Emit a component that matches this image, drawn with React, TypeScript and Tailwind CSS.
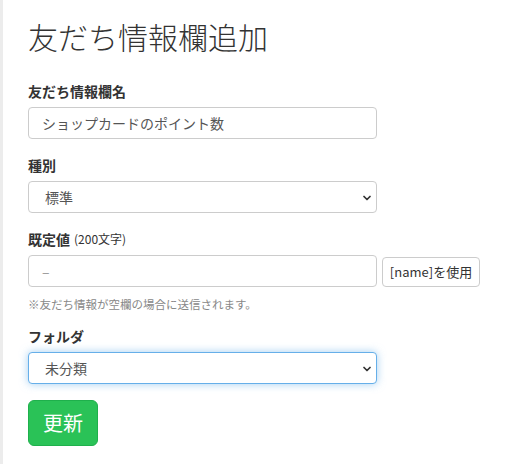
import { ChevronDown } from "lucide-react"

const font = { fontFamily: '"Noto Sans CJK JP", "Noto Sans", sans-serif' }

function Label({ children, sub }: { children: string; sub?: string }) {
  return (
    <div className="h-5 mb-[6px] flex items-center text-[14px] font-bold text-[#333] leading-5">
      {children}
      {sub && <span className="ml-1 text-[12px] font-normal">{sub}</span>}
    </div>
  )
}

function Select({ value, focused }: { value: string; focused?: boolean }) {
  return (
    <div
      className={`relative w-[349px] h-8 rounded-[4px] border bg-white flex items-center pl-[16px] text-[14px] text-[#555] ${
        focused
          ? "border-[#66afe9] shadow-[0_0_8px_rgba(102,175,233,0.6)]"
          : "border-[#ccc]"
      }`}
    >
      {value}
      <ChevronDown className="absolute right-[3px] top-[10px] h-[12px] w-[12px] text-[#333]" strokeWidth={3.5} />
    </div>
  )
}

export default function App() {
  return (
    <div className="min-h-[464px] w-[505px] bg-white border-l-[3px] border-[#ececec]" style={font}>
      <div className="pl-[25px] pt-4">
        <h1 className="h-10 leading-10 text-[30px] font-light text-[#333]">
          友だち情報欄追加
        </h1>

        <div className="mt-[25px]">
          <Label>友だち情報欄名</Label>
          <div className="w-[349px] h-8 rounded-[4px] border border-[#ccc] flex items-center pl-[13px] text-[14px] text-[#555]">
            ショップカードのポイント数
          </div>
        </div>

        <div className="mt-4">
          <Label>種別</Label>
          <Select value="標準" />
        </div>

        <div className="mt-4">
          <Label sub="(200文字)">既定値</Label>
          <div className="flex items-end gap-[5px]">
            <div className="w-[349px] h-8 rounded-[4px] border border-[#ccc] flex items-center pl-[13px] text-[14px] text-[#999]">
              –
            </div>
            <button className="h-[30px] w-[98px] rounded-[4px] border border-[#ccc] bg-white text-[13px] text-[#333]">
              [name]を使用
            </button>
          </div>
          <p className="mt-[9px] h-4 leading-4 text-[11.5px] text-[#888]">
            ※友だち情報が空欄の場合に送信されます。
          </p>
        </div>

        <div className="mt-[14px]">
          <Label>フォルダ</Label>
          <Select value="未分類" focused />
        </div>

        <button className="mt-4 w-[70px] h-[46px] rounded-[6px] bg-[#2ac257] border border-[#1fb04c] text-white text-[20px]">
          更新
        </button>
      </div>
    </div>
  )
}
